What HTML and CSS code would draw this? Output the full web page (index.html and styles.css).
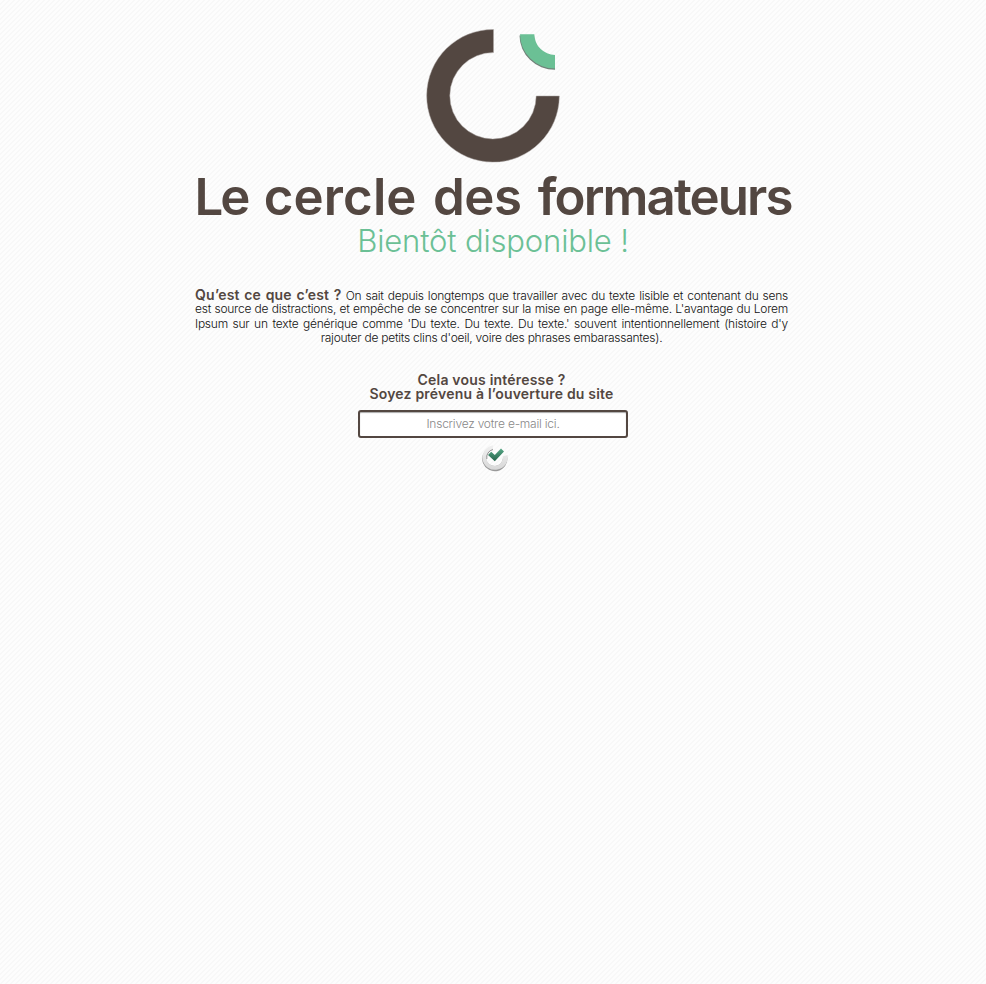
FILE: index.html
```html
<!DOCTYPE html>
<html lang="fr">
<head>
<meta charset="utf-8">
<title>Le cercle des formateurs</title>
<link rel="stylesheet" href="styles.css">
</head>
<body>
<main class="page">
  <svg class="logo" width="136" height="136" viewBox="425 28 136 136" aria-hidden="true">
    <path class="logo-ring" d="M493.5 29.5A66.3 66.3 0 1 0 559.3 96H536.2A43.2 43.2 0 1 1 493.5 52.6Z"/>
    <path class="logo-shade" d="M519.5 35.500A35.500 34.500 0 0 0 555 69.800V56A21 21 0 0 1 534 35.500Z"/>
    <path class="logo-arc" d="M520 34.300H534.300A21 21 0 0 0 555 55V68.500A35 34.500 0 0 1 520 34.300Z"/>
  </svg>
  <h1 class="title"><span class="w-le">Le</span> <span class="w-cercle">cercle</span> <span class="w-des">des</span> <span class="w-form">formateurs</span></h1>
  <h2 class="subtitle">Bientôt disponible !</h2>
  <p class="intro">
    <span class="line"><strong>Qu’est ce que c’est ?</strong> On sait depuis longtemps que travailler avec du texte lisible et contenant du sens</span>
    <span class="line">est source de distractions, et empêche de se concentrer sur la mise en page elle-même. L'avantage du Lorem</span>
    <span class="line">Ipsum sur un texte générique comme 'Du texte. Du texte. Du texte.' souvent intentionnellement (histoire d'y</span>
    <span class="line last">rajouter de petits clins d'oeil, voire des phrases embarassantes).</span>
  </p>
  <form class="signup">
    <label class="prompt" for="email"><span class="ask">Cela vous intéresse ?</span><span class="call">Soyez prévenu à l’ouverture du site</span></label>
    <input class="email" id="email" type="text" placeholder="Inscrivez votre e-mail ici.">
    <button class="submit" type="button" aria-label="Valider">
      <svg width="32" height="30" viewBox="479 444 32 30">
        <defs>
          <linearGradient id="ring" x1="0" y1="0" x2="0" y2="1"><stop offset="0" stop-color="#f1f1f1"/><stop offset="1" stop-color="#d8d8d8"/></linearGradient>
          <linearGradient id="check" x1="0" y1="0" x2="0" y2="1"><stop offset="0" stop-color="#58a987"/><stop offset="1" stop-color="#24634b"/></linearGradient>
        </defs>
        <path class="ring-shadow" d="M489 448.500A12.600 12.600 0 1 0 507.300 458L503 459A8.500 8.500 0 1 1 492 450.500Z"/>
        <path fill="url(#ring)" d="M493 446.200A12.700 12.400 0 1 0 507.600 456L502.800 457.300A8.300 8.300 0 1 1 493 450.300Z"/>
        <path class="ring-inner" d="M493 450.500A8.300 8.300 0 0 0 486.800 460"/>
        <path fill="url(#check)" d="M488 456L491.200 452.800L494.800 456L501 449.500L504 452.600L494.800 462.300Z"/>
      </svg>
    </button>
  </form>
</main>
</body>
</html>
```
FILE: styles.css
```css
body {
  margin: 0;
  min-height: 984px;
  background-color: #fdfdfd;
  background-image: linear-gradient(135deg, #f8f8f8 10%, transparent 10%, transparent 40%, #f8f8f8 40%, #f8f8f8 60%, transparent 60%, transparent 90%, #f8f8f8 90%);
  background-size: 5px 5px;
  color: #111;
  font-family: "ITC Avant Garde Gothic", "URW Gothic", Inter, sans-serif;
}

.page {
  display: flex;
  flex-direction: column;
  align-items: center;
  width: 596px;
  margin: 0 auto;
  padding-top: 28px;
}

.logo { display: block; }
.logo-ring { fill: #534741; stroke: #aaa5a2; stroke-width: .5; }
.logo-shade { fill: #72827a; }
.logo-arc { fill: #6bc095; }

.title,
.subtitle {
  margin: 0;
  white-space: nowrap;
}

.title {
  height: 62px;
  line-height: 65px;
  font-size: 51px;
  font-weight: 600;
  letter-spacing: -.5px;
  word-spacing: 4px;
  color: #534741;
}

.w-le { letter-spacing: -3px; }
.w-cercle { letter-spacing: .1px; }
.w-form { letter-spacing: -1.9px; }

.subtitle {
  height: 40px;
  line-height: 29px;
  font-size: 31px;
  font-weight: 300;
  letter-spacing: -.15px;
  color: #6bc095;
}

.intro {
  width: 593px;
  margin: 21px 3px 0 0;
  font-size: 12px;
  font-weight: 300;
  letter-spacing: -.25px;
}

.line {
  display: block;
  height: 14.400px;
  line-height: 15.600px;
  white-space: nowrap;
  text-align: justify;
  text-align-last: justify;
}

.last { text-align-last: center; }

.line strong {
  font-size: 14px;
  font-weight: 600;
  letter-spacing: .15px;
  color: #534741;
}

.signup {
  display: flex;
  flex-direction: column;
  align-items: center;
  margin-top: 28.400px;
}

.prompt {
  display: flex;
  flex-direction: column;
  align-items: center;
  margin-right: 3px;
  font-size: 14px;
  font-weight: 600;
  line-height: 14px;
  letter-spacing: .2px;
  color: #534741;
}

.email {
  box-sizing: border-box;
  width: 270px;
  height: 28px;
  margin-top: 9px;
  padding: 0;
  border: 2px solid #534741;
  border-radius: 3px;
  background: #fff;
  box-shadow: inset 0 1px 1px #aaa;
  font: 300 12px "ITC Avant Garde Gothic", "URW Gothic", Inter, sans-serif;
  letter-spacing: -.22px;
  text-align: center;
}

.email::placeholder { color: #888; }

.submit {
  display: block;
  margin: 5px 0 0 4px;
  padding: 0;
  border: 0;
  background: none;
}

.submit svg { display: block; }
.ring-shadow { fill: #999; filter: blur(.6px); }
.ring-inner { fill: none; stroke: #888; stroke-width: .9; }
```
